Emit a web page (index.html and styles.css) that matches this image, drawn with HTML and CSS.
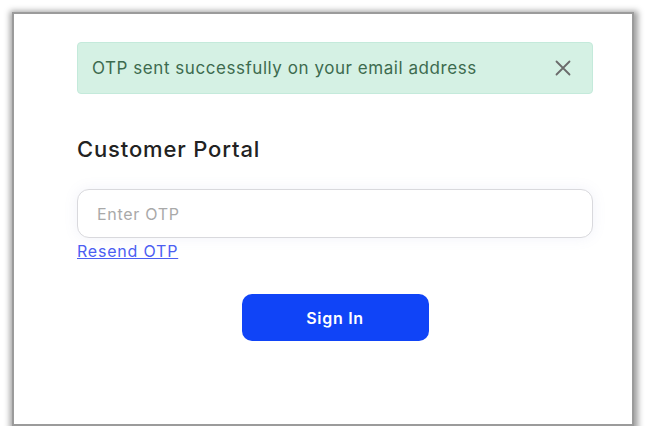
FILE: index.html
```html
<!DOCTYPE html>
<html>
<head>
<meta charset="utf-8">
<link rel="stylesheet" href="styles.css">
</head>
<body>
<div class="frame">
  <div class="content">
    <div class="alert">
      <span class="alert-text">OTP sent successfully on your email address</span>
      <svg class="close" width="16" height="16" viewBox="0 0 16 16"><path d="M1.5 1.5 L14.5 14.5 M14.5 1.5 L1.5 14.5" stroke="#6b6b6b" stroke-width="1.8" fill="none" stroke-linecap="round"/></svg>
    </div>
    <h1 class="title">Customer Portal</h1>
    <input class="otp" type="text" placeholder="Enter OTP">
    <a class="resend" href="#">Resend OTP</a>
    <div class="actions">
      <button class="signin">Sign In</button>
    </div>
  </div>
</div>
</body>
</html>
```
FILE: styles.css
```css
html, body {
  margin: 0;
  padding: 0;
  background: #ffffff;
}
body {
  font-family: "Inter", "Open Sans", sans-serif;
}
.frame {
  margin: 12px 0 0 12px;
  width: 618px;
  height: 410px;
  border: 2px solid #9b9b9b;
  background: #ffffff;
  box-shadow: 1px 2px 6px 3px rgba(0,0,0,0.38);
}
.content {
  padding: 28px 0 0 63px;
  width: 516px;
}
.alert {
  box-sizing: border-box;
  height: 52px;
  background: #d5f1e4;
  border: 1px solid #c4eadb;
  border-radius: 4px;
  display: flex;
  align-items: center;
  justify-content: space-between;
  padding: 0 21px 0 14px;
}
.alert-text {
  font-size: 17px;
  color: #3d6b4f;
  letter-spacing: 0.55px;
}
.close {
  display: block;
}
.title {
  margin: 42px 0 0 0;
  font-size: 22px;
  font-weight: 500;
  color: #222222;
  line-height: 26px;
  letter-spacing: 0.85px;
}
.otp {
  display: block;
  box-sizing: border-box;
  margin-top: 27px;
  width: 516px;
  height: 49px;
  border: 1px solid #d9d9dd;
  border-radius: 12px;
  padding: 0 19px;
  font-family: inherit;
  font-size: 16px;
  letter-spacing: 0.7px;
  color: #333;
  outline: none;
  box-shadow: 0 0 14px rgba(120,130,200,0.10);
}
.otp::placeholder {
  color: #a9a9a9;
}
.resend {
  display: inline-block;
  margin-top: 2px;
  font-size: 16px;
  line-height: 22px;
  letter-spacing: 0.8px;
  color: #4c5ef2;
  text-decoration: underline;
}
.actions {
  display: flex;
  justify-content: center;
  margin-top: 32px;
}
.signin {
  width: 187px;
  height: 47px;
  border: none;
  border-radius: 10px;
  background: #1044f7;
  color: #ffffff;
  font-family: inherit;
  font-size: 16px;
  font-weight: 600;
  letter-spacing: 0.7px;
  cursor: pointer;
}
```
